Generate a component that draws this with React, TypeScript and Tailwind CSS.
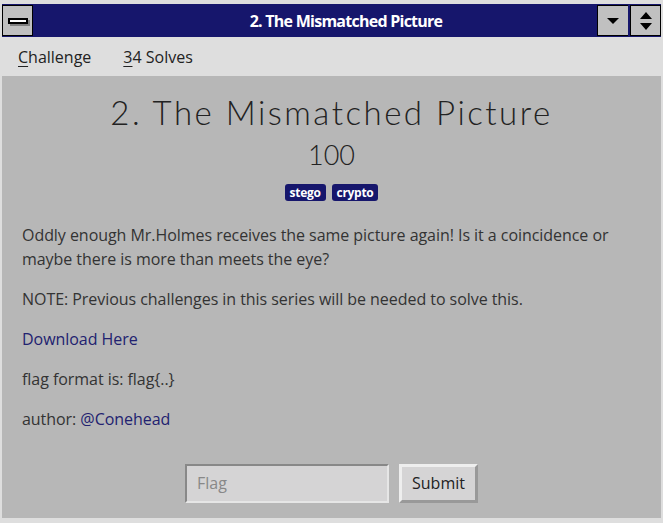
import React from "react";

function TitleButton({ children, className = "" }: { children: React.ReactNode; className?: string }) {
  return (
    <div
      className={`flex h-[31px] w-[31px] items-center justify-center border border-black bg-[#c0c0c0] ${className}`}
    >
      {children}
    </div>
  );
}

export default function App() {
  return (
    <div className="h-[523px] w-[663px] overflow-hidden bg-[#dedede] pt-[4px] font-['Open_Sans',sans-serif]">
      {/* title bar */}
      <div className="mx-[2px] flex h-[33px] items-center bg-[#16166c]">
        <TitleButton>
          <div className="relative h-[6px] w-[20px]">
            <div className="absolute left-[2px] top-[2px] h-[6px] w-[20px] bg-[#808080]" />
            <div className="absolute inset-0 border-2 border-black bg-white" />
          </div>
        </TitleButton>
        <div className="flex-1 pl-[62px] text-center text-[16px] font-bold tracking-[-0.75px] text-white">
          2. The Mismatched Picture
        </div>
        <TitleButton className="border-r-0">
          <svg width="12" height="8" viewBox="0 0 12 8">
            <path d="M0 1h12L6 7z" fill="black" />
          </svg>
        </TitleButton>
        <div className="w-[2px]" />
        <TitleButton>
          <svg width="12" height="20" viewBox="0 0 12 20">
            <path d="M6 1l6 7H0z M0 12h12L6 19z" fill="black" />
          </svg>
        </TitleButton>
      </div>

      {/* menu */}
      <div className="flex h-[39px] items-center gap-[32px] pl-[18px] text-[16px] text-[#222]">
        <span>
          <span className="underline underline-offset-[3px]">C</span>hallenge
        </span>
        <span>
          <span className="underline underline-offset-[3px]">3</span>4 Solves
        </span>
      </div>

      {/* content */}
      <div className="mx-[2px] h-[442px] bg-[#b7b7b7] px-[20px] pt-[12px]">
        <h1 className="text-center font-['Lato',sans-serif] text-[33px] font-light tracking-[2.5px] text-[#222]">
          2. The Mismatched Picture
        </h1>
        <div className="text-center font-['Lato',sans-serif] text-[27px] font-light leading-[34px] text-[#222]">
          100
        </div>
        <div className="mt-[12px] flex justify-center gap-[6px]">
          <span className="rounded-[3px] bg-[#16166c] px-[5px] text-[12px] font-bold leading-[17px] tracking-[-0.3px] text-white">
            stego
          </span>
          <span className="rounded-[3px] bg-[#16166c] px-[5px] text-[12px] font-bold leading-[17px] tracking-[-0.3px] text-white">
            crypto
          </span>
        </div>

        <div className="mt-[22px] text-[16px] leading-[24px] tracking-[-0.05px] text-[#333]">
          <p>
            Oddly enough Mr.Holmes receives the same picture again! Is it a coincidence or maybe there is more than
            meets the eye?
          </p>
          <p className="mt-[16px]">NOTE: Previous challenges in this series will be needed to solve this.</p>
          <p className="mt-[16px] text-[#222270]">Download Here</p>
          <p className="mt-[16px]">flag format is: flag{"{..}"}</p>
          <p className="mt-[16px]">
            author: <span className="text-[#222270]">@Conehead</span>
          </p>
        </div>

        <div className="mt-[33px] flex justify-center gap-[10px]">
          <input
            placeholder="Flag"
            className="h-[39px] w-[204px] border-2 border-b-[#e6e6e6] border-l-[#888] border-r-[#e6e6e6] border-t-[#888] bg-[#d5d4d5] px-[10px] text-[16px] outline-none placeholder:text-[#888]"
          />
          <button
            type="button"
            className="h-[39px] w-[79px] border-[3px] border-b-[#999] border-l-[#eee] border-r-[#999] border-t-[#eee] bg-[#d5d4d5] text-[16px] text-[#222]"
          >
            Submit
          </button>
        </div>
      </div>
    </div>
  );
}
